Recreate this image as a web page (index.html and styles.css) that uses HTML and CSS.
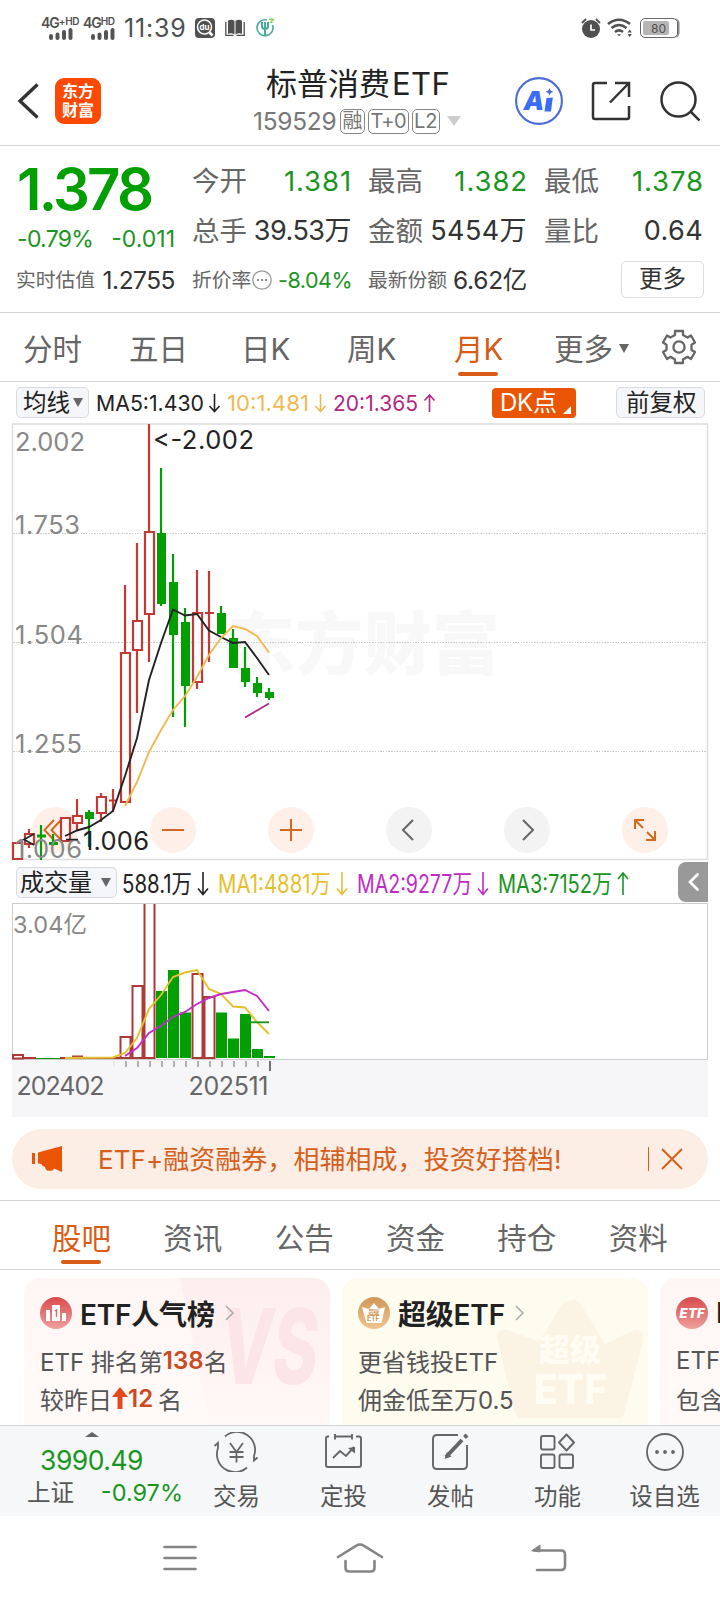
FILE: index.html
```html
<!DOCTYPE html>
<html lang="zh-CN">
<head>
    <meta charset="UTF-8">
    <meta name="viewport" content="width=device-width, initial-scale=1.0">
    <title>标普消费ETF 159529</title>
    <link rel="stylesheet" href="styles.css">
</head>
<body>
    <div class="status-bar">
        <div class="signal">
            <span>4G<sup>+HD</sup></span>
            <svg width="24" height="12" viewBox="0 0 24 12"><path d="M2 10V8M8.500 10V6.500M15 10V4M21.500 10V2" stroke="#555" stroke-width="4" stroke-linecap="round"/></svg>
        </div>
        <div class="signal second">
            <span>4G<sup>HD</sup></span>
            <svg width="24" height="12" viewBox="0 0 24 12"><path d="M2 10V8M8.500 10V6.500M15 10V4M21.500 10V2" stroke="#555" stroke-width="4" stroke-linecap="round"/></svg>
        </div>
        <span class="clock">11:39</span>
        <svg class="app-du" width="20" height="20" viewBox="0 0 20 20">
            <rect width="20" height="20" rx="4" fill="#505050"/>
            <circle cx="9.500" cy="9" r="7" fill="none" stroke="#fff" stroke-width="1.500"/>
            <path d="M14 14l3.500 3.500" stroke="#fff" stroke-width="2.500"/>
            <text x="4.500" y="12.300" fill="#fff" class="du-text">du</text>
        </svg>
        <svg class="app-book" width="20" height="18" viewBox="0 0 20 18">
            <path d="M3 1.800Q6-.5 9.500 1.800V15.500Q6 13.500 3 15zM17 1.800Q14-.5 10.500 1.800V15.500Q14 13.500 17 15z" fill="#505050"/>
            <path d="M.8 3v13.300h7.700M19.200 3v13.300h-7.700" fill="none" stroke="#505050" stroke-width="1.300"/>
        </svg>
        <svg class="app-fork" width="20" height="20" viewBox="0 0 20 20" fill="none" stroke="#4bab98">
            <path d="M11 3A8 8 0 1 0 16.500 8" stroke-width="1.600"/>
            <path d="M6 5v4Q6 12 9 12M9 5v13M12 5v4Q12 12 9 12" stroke-width="2"/>
            <path d="M13 2l5 1M14 6l4-4M16 1v5" stroke="#8ed35b" stroke-width="1.300"/>
        </svg>
        <div class="status-right">
            <svg width="20" height="20" viewBox="0 0 20 20">
                <circle cx="10" cy="11" r="9" fill="#505050"/>
                <path d="M1 5l4-4M19 5l-4-4" stroke="#505050" stroke-width="1.800"/>
                <path d="M10 6.500V12h4" fill="none" stroke="#fff" stroke-width="1.700"/>
            </svg>
            <svg width="26" height="20" viewBox="0 0 26 20" fill="none" stroke="#505050" stroke-width="2.600">
                <path d="M1 6Q12-2.500 23 6M4.500 10Q12 4 19.500 10M8 14Q12 10.800 16 14"/>
                <path d="M10 16.300l2 2 2-2z" fill="#505050" stroke="none"/>
                <path d="M20.500 14.500l2.200-3 2.200 3zM20.500 16l2.200 3 2.200-3z" fill="#505050" stroke="none"/>
            </svg>
            <div class="battery"><span>80</span></div>
        </div>
    </div>

    <header class="header">
        <svg class="back" width="22" height="36" viewBox="0 0 22 36"><path d="M20.500 1.500L3 18l17.500 16.500" fill="none" stroke="#333" stroke-width="3.400"/></svg>
        <div class="logo">东方<br>财富</div>
        <div class="title">
            <h1>标普消费<span>ETF</span></h1>
            <div class="code">
                <span>159529</span><i>融</i><i class="t0">T+0</i><i>L2</i>
                <svg width="14" height="10" viewBox="0 0 14 10"><path d="M0 0h14L7 10z" fill="#ccc"/></svg>
            </div>
        </div>
        <svg class="ai" width="48" height="48" viewBox="0 0 48 48">
            <circle cx="24" cy="24" r="22.900" fill="#fff" stroke="#4a6bd8" stroke-width="2.100"/>
            <text x="8.500" y="33" class="ai-text">A</text>
            <path d="M31.500 21l6.300-.5L36 34.500h-6.500z" fill="#3b6cf6"/>
            <path d="M34.500 11l1.200 2.600 2.600 1.200-2.600 1.200-1.200 2.600-1.200-2.600-2.600-1.200 2.600-1.200z" fill="#4a6bd8"/>
        </svg>
        <svg class="share" width="40" height="40" viewBox="0 0 40 40" fill="none" stroke="#333" stroke-width="2.500">
            <path d="M16 2H4Q2 2 2 4v32q0 2 2 2h32q2 0 2-2V25M19 21.500L37 3M24 2h14v14"/>
        </svg>
        <svg class="search" width="40" height="40" viewBox="0 0 40 40" fill="none" stroke="#333" stroke-width="2.500">
            <circle cx="18.500" cy="18.500" r="17"/><path d="M30.500 30.500l9 9"/>
        </svg>
    </header>

    <section class="quote">
        <div class="price">
            <strong>1.378</strong>
            <div><span>-0.79%</span><span>-0.011</span></div>
        </div>
        <div class="item"><label>今开</label><b class="down">1.381</b></div>
        <div class="item"><label>最高</label><b class="down">1.382</b></div>
        <div class="item"><label>最低</label><b class="down">1.378</b></div>
        <div class="item"><label>总手</label><b>39.53万</b></div>
        <div class="item"><label>金额</label><b class="wide">5454万</b></div>
        <div class="item"><label>量比</label><b class="wide">0.64</b></div>
        <div class="item small"><label>实时估值</label><b>1.2755</b></div>
        <div class="item small">
            <label>折价率</label>
            <svg width="20" height="20" viewBox="0 0 20 20"><circle cx="10" cy="10" r="9.200" fill="none" stroke="#999" stroke-width="1.300"/><path d="M5 10h2M9 10h2M13 10h2" stroke="#888" stroke-width="2"/></svg>
            <b class="down rate">-8.04%</b>
        </div>
        <div class="item small"><label>最新份额</label><b>6.62亿</b></div>
        <button class="more">更多</button>
    </section>

    <nav class="periods">
        <a>分时</a><a>五日</a><a>日K</a><a>周K</a><a class="active">月K</a>
        <a class="more-period">更多<svg width="10" height="9" viewBox="0 0 10 9"><path d="M0 0h10L5 9z" fill="#666"/></svg></a>
        <svg class="gear" width="36" height="36" viewBox="0 0 36 36" fill="none" stroke="#666" stroke-width="2.300">
            <path d="M14 2h8v4l4.500 2.600L30 6.500l4 7-3.500 2.200v5.200L34 23l-4 7-3.500-2.200L22 30.500V34h-8v-3.500l-4.500-2.700L6 30l-4-7 3.500-2.100v-5.200L2 13.500l4-7 3.500 2.100L14 6z" stroke-linejoin="round"/>
            <circle cx="18" cy="18" r="5.600"/>
        </svg>
    </nav>

    <div class="ma-row">
        <span class="chip">均线<svg width="10" height="9" viewBox="0 0 10 9"><path d="M0 0h10L5 9z" fill="#666"/></svg></span>
        <svg class="ma-values" width="344" height="34" viewBox="94 386 344 34">
            <text x="96" y="411" textLength="108" lengthAdjust="spacingAndGlyphs">MA5:1.430</text>
            <text x="227" y="411" textLength="82" lengthAdjust="spacingAndGlyphs" fill="#f0b952">10:1.481</text>
            <text x="333" y="411" textLength="85" lengthAdjust="spacingAndGlyphs" fill="#b02a83">20:1.365</text>
            <g fill="none" stroke-width="1.600">
                <path d="M214.500 394v17M209.500 406l5 5.500 5-5.500" stroke="#222"/>
                <path d="M320.500 394v17M315.500 406l5 5.500 5-5.500" stroke="#f0b952"/>
                <path d="M429.500 412v-17M424.500 400.500l5-5.500 5 5.500" stroke="#b02a83"/>
            </g>
        </svg>
        <span class="dk">DK点<svg width="8" height="8" viewBox="0 0 8 8"><path d="M8 0v8H0z" fill="#fff"/></svg></span>
        <span class="chip restore">前复权</span>
    </div>

    <!-- monthly candles -->
    <svg class="chart" width="698" height="439" viewBox="11 422 698 439">
        <rect x="12.500" y="424" width="695" height="435.500" fill="none" stroke="#ddd" stroke-width="1.500"/>
        <text class="watermark" x="227" y="669" textLength="273">东方财富</text>
        <path d="M13 533H707M13 642.500H707M13 751.500H707" stroke="#ccc" stroke-dasharray="1.500 1.200" class="grid"/>
        <g class="axis">
            <text x="15" y="451" textLength="70">2.002</text>
            <text x="15" y="534" textLength="65">1.753</text>
            <text x="15" y="644" textLength="68">1.504</text>
            <text x="15" y="753" textLength="67">1.255</text>
        </g>
        <g class="tools">
            <g fill="#fef0e9"><circle cx="55" cy="830" r="23"/><circle cx="173" cy="830" r="23"/><circle cx="291" cy="830" r="23"/><circle cx="645" cy="830" r="23"/></g>
            <g fill="#f3f3f3"><circle cx="409" cy="830" r="23"/><circle cx="527" cy="830" r="23"/></g>
            <path d="M54 820l-9.500 10 9.500 10M61 820l-9.500 10 9.500 10M162 830h22M280 830h22M291 819v22" stroke="#d4691f"/>
            <path d="M413 820l-10 10 10 10M523 820l10 10-10 10" stroke="#666"/>
            <path d="M635 829v-9h9M635 820l8 8M655 831v9h-9M655 840l-8-8" stroke="#d4691f" stroke-width="2.300"/>
        </g>
        <g class="up">
            <path d="M29 829v5M29 844v4M77 799v17M77 823v7M101 793v4M101 813v9M113 789v23M109 800.500h8M125 585v68M137 543v78M137 650v63M149 424v108M149 614v48M197 570v43M197 682v7M209 571v91M205 613h9"/>
            <path d="M13 843h9v16h-9zM25 834h9v10h-9zM61 818h9v23h-9zM73 816h9v7h-9zM97 797h9v16h-9zM121 653h9v149h-9zM133 621h9v29h-9zM145 532h9v82h-9zM193 613h9v69h-9z"/>
        </g>
        <g class="down-bar">
            <path d="M41 825v35M53 834v12M89 810v37M161 468v138M173 554v163M185 608v119M221 606v28M233 629v39M245 647v40M257 677v20M269 688v12" class="wick"/>
            <path d="M37 834.500h9v3h-9zM49 842h9v3h-9zM85 812h9v7h-9zM157 533h9v71h-9zM169 582h9v53h-9zM181 622h9v64h-9zM217 613h9v21h-9zM229 638h9v30h-9zM241 668h9v14h-9zM253 683h9v10h-9zM265 692h9v6h-9z"/>
        </g>
        <g class="lines">
            <polyline stroke="#222" points="65,836 77,830.500 89,827 101,820 113,811 125,776 137,738 149,680 161,643 173,609.500 185,615.500 197,614 209,630.500 221,637 233,643 245,642 257,658 269,675"/>
            <polyline stroke="#f0b952" points="125,806 137,782 149,752 161,730 173,710 185,696 197,677 209,655 221,638 233,626 245,629 257,636 269,652.500"/>
            <path stroke="#b02a83" d="M245 717.500l24-14"/>
        </g>
        <text class="axis" x="15" y="858" textLength="67">1.006</text>
        <g class="extreme">
            <text x="153" y="449" textLength="101">&lt;-2.002</text>
            <text x="83" y="850" textLength="66">1.006</text>
            <path d="M34 834l-10 5.500 10 5.500M66 839.500h12" stroke="#222" stroke-width="1.600" fill="none"/>
        </g>
    </svg>

    <div class="vol-row">
        <span class="chip">成交量<svg width="10" height="9" viewBox="0 0 10 9"><path d="M0 0h10L5 9z" fill="#666"/></svg></span>
        <svg class="vol-values" width="520" height="38" viewBox="118 862 520 38">
            <text x="122" y="892" textLength="70" lengthAdjust="spacingAndGlyphs">588.1万</text>
            <text x="218" y="892" textLength="113" lengthAdjust="spacingAndGlyphs" fill="#e5c02c">MA1:4881万</text>
            <text x="357" y="892" textLength="115" lengthAdjust="spacingAndGlyphs" fill="#c02cc6">MA2:9277万</text>
            <text x="498" y="892" textLength="114" lengthAdjust="spacingAndGlyphs" fill="#1c9422">MA3:7152万</text>
            <g fill="none" stroke-width="1.600">
                <path d="M203 871v22M198 887.500l5 6 5-6" stroke="#222"/>
                <path d="M342 871v22M337 887.500l5 6 5-6" stroke="#e5c02c"/>
                <path d="M483 871v22M478 887.500l5 6 5-6" stroke="#c02cc6"/>
                <path d="M623 894v-22M618 878l5-6 5 6" stroke="#1c9422"/>
            </g>
        </svg>
        <span class="collapse"><svg width="11" height="18" viewBox="0 0 11 18"><path d="M9.500 1.500L2 9l7.500 7.500" fill="none" stroke="#fff" stroke-width="2.700" stroke-linecap="round"/></svg></span>
    </div>

    <!-- volume -->
    <svg class="volume" width="698" height="215" viewBox="11 902 698 215">
        <rect x="12" y="1060" width="696" height="57" fill="#f6f6f9"/>
        <rect x="12.500" y="903.500" width="695" height="156" fill="#fff" stroke="#ccc"/>
        <text class="vol-max" x="13" y="933" textLength="74">3.04亿</text>
        <g class="up vol-up">
            <path d="M13 1055h10v3.500h-10zM24 1058h12M60 1058h60M72 1056.500h11M120.500 1037h10v21h-10zM132.500 986h10v72h-10zM144.500 904v154h10v-154M192.500 974h10v84h-10zM204.500 997h10v61h-10z"/>
        </g>
        <path d="M36 1058h24v1H36zM156 991h11v67h-11zM168 970h11v88h-11zM180 1012.500h11v45.500h-11zM216 1012.500h11v45.500h-11zM228 1038.500h11v19.500h-11zM240 1014h11v44h-11zM252 1049h11v9h-11zM264 1056h11v2h-11z" fill="#029f02"/>
        <g class="lines">
            <polyline stroke="#e5c02c" points="65,1058 113,1057.500 125,1053 137,1038 149,1009 161,995 173,977 185,972.500 197,970 209,989 221,994 233,1006.500 245,1007.500 257,1022 269,1034"/>
            <polyline stroke="#c02cc6" points="125,1056 137,1048 149,1033 161,1026 173,1017 185,1012 197,1004 209,998 221,994 233,992 245,990 257,996 269,1011"/>
            <path stroke="#1c9422" d="M251 1022.300h18"/>
        </g>
        <path d="M126 1061v6M138 1061v6M150 1061v6M162 1061v6M174 1061v6M186 1061v6M198 1061v6M210 1061v6M222 1061v6M234 1061v6M246 1061v6M258 1061v6" stroke="#999" stroke-width="1.500"/>
        <path d="M114 1061v6" stroke="#ddd"/>
        <path d="M270 1061v10" stroke="#444" stroke-width="1.500"/>
        <g class="dates">
            <text x="16.500" y="1094.500" textLength="88">202402</text>
            <text x="188.500" y="1094.500" textLength="80">202511</text>
        </g>
    </svg>

    <div class="banner">
        <svg width="31" height="28" viewBox="0 0 31 28" fill="#e95504"><path d="M0 8h3v11H0zM6 7.500L30 1v26l-8-3.500q-1 3-4.500 2-3.500 1-4.500-3.500-3-.5-3.500-3L6 18.500z"/></svg>
        <span class="text">ETF+融资融券，相辅相成，投资好搭档!</span>
        <span class="divider"></span>
        <svg class="close" width="22" height="22" viewBox="0 0 22 22"><path d="M1 1l20 20M21 1L1 21" stroke="#d4601c" stroke-width="2"/></svg>
    </div>

    <nav class="tabs">
        <a class="active">股吧</a><a>资讯</a><a>公告</a><a>资金</a><a>持仓</a><a>资料</a>
    </nav>

    <div class="cards">
        <article class="card pink">
            <svg class="card-bg" width="150" height="148" viewBox="0 0 150 148">
                <defs><linearGradient id="fade" x2="0" y2="1"><stop stop-color="#fdeeee"/><stop offset="1" stop-color="#fff8f7"/></linearGradient></defs>
                <path d="M0 0h150v148H30z" fill="url(#fade)"/>
                <text x="40" y="106" class="vs-text" textLength="98" lengthAdjust="spacingAndGlyphs">VS</text>
            </svg>
            <h2>
                <svg width="32" height="32" viewBox="0 0 32 32">
                    <defs><linearGradient id="red" x2="0" y2="1"><stop stop-color="#d9494c"/><stop offset="1" stop-color="#efa09d"/></linearGradient></defs>
                    <circle cx="16" cy="16" r="16" fill="url(#red)"/>
                    <path d="M6 13h4v11H6zM12 8h8v16h-8zM22 16h4v8h-4z" fill="#fff"/>
                    <path d="M15 14l1.500-1v7" fill="none" stroke="#df6866" stroke-width="1.500"/>
                </svg>
                ETF人气榜
                <svg class="arrow" width="9" height="16" viewBox="0 0 9 16"><path d="M1 1l7 7-7 7" fill="none" stroke="#aaa" stroke-width="1.500"/></svg>
            </h2>
            <p>ETF 排名第<em>138</em>名</p>
            <p>较昨日<svg width="16" height="22" viewBox="0 0 16 22"><path d="M8 0l8 10h-5.500v12h-5V10H0z" fill="#e04a1c"/></svg><em>12</em><span class="rank-unit">名</span></p>
        </article>
        <article class="card yellow">
            <svg class="card-bg crown" width="150" height="125" viewBox="0 0 150 125">
                <path d="M73 4q6-4 11 2l25 41 29-14q10-1 9 10l-19 74q-1 4-6 4H26q-5 0-7-5L2 45q-4-14 10-12l31 12L65 9q3-5 8-5z" fill="#fbf3e3"/>
                <g fill="#fffdf3"><text x="43" y="64" class="crown-cn" textLength="62">超级</text><text x="38" y="107" class="crown-en" textLength="73" lengthAdjust="spacingAndGlyphs">ETF</text></g>
            </svg>
            <h2>
                <svg width="32" height="32" viewBox="0 0 32 32">
                    <defs><linearGradient id="gold" x2="0" y2="1"><stop stop-color="#cf9758"/><stop offset="1" stop-color="#efc48d"/></linearGradient></defs>
                    <circle cx="16" cy="16" r="16" fill="url(#gold)"/>
                    <path d="M16 6l5 6 6-2-3.500 16h-15L4 10l7 2z" fill="#fff"/>
                    <text x="10.500" y="17" class="tiny">超级</text><text x="9" y="24" class="tiny en">ETF</text>
                </svg>
                超级ETF
                <svg class="arrow" width="9" height="16" viewBox="0 0 9 16"><path d="M1 1l7 7-7 7" fill="none" stroke="#aaa" stroke-width="1.500"/></svg>
            </h2>
            <p>更省钱投ETF</p>
            <p>佣金低至万0.5</p>
        </article>
        <article class="card pink">
            <h2>
                <svg width="32" height="32" viewBox="0 0 32 32"><circle cx="16" cy="16" r="16" fill="url(#red)"/><text x="3.500" y="21" class="etf-icon" textLength="25">ETF</text></svg>
                ETF
            </h2>
            <p>ETF</p>
            <p>包含</p>
        </article>
    </div>

    <footer class="toolbar">
        <div class="index">
            <svg width="14" height="5" viewBox="0 0 14 5"><path d="M0 5l7-5 7 5z" fill="#666"/></svg>
            <strong>3990.49</strong>
            <div><span>上证</span><b>-0.97%</b></div>
        </div>
        <a>
            <svg width="46" height="40" viewBox="0 0 46 40" fill="none" stroke="#666" stroke-width="1.800">
                <path d="M12 4.500A18 18 0 0 1 41 24v4.500l3.500-3M34 35.500A18 18 0 0 1 5 16v-5l-3.500 3"/>
                <path d="M17 11l6.500 9L30 11M23.500 20v10.500M16.500 20h14M16.500 25h14"/>
            </svg>
            交易
        </a>
        <a>
            <svg width="46" height="40" viewBox="0 0 46 40" fill="none" stroke="#666" stroke-width="1.900">
                <path d="M9 4.500H8q-2 0-2 2V33q0 2 2 2h31q2 0 2-2V6.500q0-2-2-2h-3M15 4.500h17M15 2v5.500M32 2v5.500"/>
                <path d="M13 26l7-7 6 5 8-9"/><path d="M28 16l7-1v6.500z" fill="#666" stroke="none"/>
            </svg>
            定投
        </a>
        <a>
            <svg width="46" height="40" viewBox="0 0 46 40" fill="none" stroke="#666" stroke-width="1.900">
                <path d="M31 3H10q-4 0-4 4v26q0 4 4 4h26q4 0 4-4V13"/>
                <path d="M35 8L19 25" stroke-width="4"/><path d="M37.500 5.500l2.500-2.500" stroke-width="4"/><path d="M20 20l-2.500 7 7-2.500z" fill="#666" stroke="none"/>
            </svg>
            发帖
        </a>
        <a>
            <svg width="46" height="40" viewBox="0 0 46 40" fill="none" stroke="#666" stroke-width="1.900">
                <rect x="7" y="4" width="13.500" height="13.500" rx="2"/><rect x="7" y="22.500" width="13.500" height="13.500" rx="2"/><rect x="25.500" y="22.500" width="13.500" height="13.500" rx="2"/>
                <path d="M32.500 2.500l7.500 8-7.500 8-7.500-8z" stroke-linejoin="round"/>
            </svg>
            功能
        </a>
        <a>
            <svg width="46" height="40" viewBox="0 0 46 40"><circle cx="23" cy="20" r="18" fill="none" stroke="#666" stroke-width="1.800"/><g fill="#666"><circle cx="15" cy="20" r="1.900"/><circle cx="23" cy="20" r="1.900"/><circle cx="31" cy="20" r="1.900"/></g></svg>
            设自选
        </a>
    </footer>

    <div class="system-nav">
        <svg width="34" height="28" viewBox="0 0 34 28"><path d="M1.500 3h31M1.500 14h31M1.500 25h31"/></svg>
        <svg width="48" height="30" viewBox="0 0 48 30"><path d="M2 14L20 2.800q4-2.500 8 0L46 14M9.500 18v7q0 3.500 3.500 3.500h22q3.500 0 3.500-3.500v-7"/></svg>
        <svg width="36" height="28" viewBox="0 0 36 28"><path d="M3 6.500h27q4 0 4 4V22q0 4-4 4H6"/><path d="M1 6.500L9 1v6.500z" fill="#858585" stroke-width="1"/></svg>
    </div>
</body>
</html>
```

FILE: styles.css
```css
* {
    box-sizing: border-box;
}
body {
    margin: 0;
    width: 720px;
    height: 1600px;
    overflow: hidden;
    background: #fff;
    color: #333;
    font-family: Inter, "Noto Sans CJK SC", sans-serif;
}
svg {
    display: block;
    flex: none;
}
b, em, i {
    font-weight: 400;
    font-style: normal;
}

/* status bar */
.status-bar {
    display: flex;
    align-items: center;
    height: 56px;
    padding: 0 42px 0 41px;
    color: #505050;
}
.signal {
    width: 37px;
    height: 23px;
    font-size: 14px;
    font-weight: 600;
    line-height: 11px;
    letter-spacing: -1px;
    white-space: nowrap;
}
.signal sup {
    font-size: 10px;
    line-height: 1px;
    vertical-align: 3px;
    letter-spacing: -0.4px;
}
.signal svg {
    margin-left: 8px;
}
.signal.second {
    margin-left: 5px;
    width: 34px;
}
.clock {
    width: 63px;
    margin-left: 7px;
    font-size: 25px;
    letter-spacing: 0.8px;
}
.app-du {
    margin-left: 8px;
}
.du-text {
    font-size: 8px;
    font-weight: 700;
}
.app-book {
    margin-left: 10px;
}
.app-fork {
    margin: -3px 0 0 11px;
}
.status-right {
    display: flex;
    align-items: center;
    gap: 6px;
    margin-left: auto;
}
.status-right svg:first-child {
    margin-left: -1px;
}
.battery {
    width: 38px;
    height: 20px;
    margin-left: 1px;
    padding: 2px;
    border: 1.500px solid #666;
    border-radius: 5px;
    box-shadow: 2px 0 0 -0.5px #888;
}
.battery span {
    display: block;
    width: 26px;
    height: 14px;
    padding-left: 8px;
    border-radius: 2px;
    background: #b5b5b5;
    font-size: 12px;
    line-height: 15px;
}

/* header */
.header {
    display: flex;
    align-items: center;
    height: 90px;
    padding: 0 20px 0 17px;
    border-bottom: 1px solid #d5d5d5;
}
.logo {
    width: 46px;
    height: 46px;
    margin-left: 16px;
    padding-top: 4px;
    border-radius: 9px;
    background: #fc4a04;
    color: #fff;
    font-size: 16px;
    font-weight: 700;
    line-height: 19px;
    text-align: center;
}
.title {
    width: 214px;
    margin-left: 152px;
}
h1 {
    margin: 0 0 0 13px;
    color: #222;
    font-size: 31px;
    font-weight: 400;
    line-height: 41px;
    white-space: nowrap;
}
h1 span {
    margin-left: 2px;
    letter-spacing: 0.4px;
}
.code {
    display: flex;
    align-items: center;
    gap: 3px;
    height: 34px;
    color: #777;
    font-size: 24.500px;
}
.code span {
    width: 84px;
    letter-spacing: -0.3px;
}
.code i {
    height: 25px;
    padding: 0 1.500px;
    border: 1.500px solid #888;
    border-radius: 5px;
    font-size: 20px;
    line-height: 22px;
    white-space: nowrap;
}
.code .t0 {
    letter-spacing: -0.6px;
}
.code svg {
    margin-left: 4px;
}
.ai {
    margin-left: 48px;
}
.ai-text {
    fill: #3b6cf6;
    font-size: 26px;
    font-weight: 900;
    font-style: italic;
}
.share {
    margin-left: 28px;
}
.search {
    margin-left: 29px;
}

/* quote */
.quote {
    display: grid;
    grid-template-columns: repeat(4, 158px);
    grid-template-rows: 50px 49px 50px;
    column-gap: 18px;
    align-items: center;
    height: 167px;
    padding: 10px 17px 0;
    border-bottom: 1px solid #d5d5d5;
}
.price {
    grid-row: span 2;
    align-self: start;
    color: #029f02;
}
.price strong {
    display: block;
    padding-top: 3px;
    font-size: 58px;
    font-weight: 600;
    line-height: 60px;
    letter-spacing: -2.800px;
}
.price div {
    display: flex;
    justify-content: space-between;
    margin-top: 6px;
    color: #1c9422;
    font-size: 23px;
    line-height: 28px;
    letter-spacing: -0.7px;
}
.price div span:last-child {
    letter-spacing: 0;
}
.item {
    display: flex;
    align-items: center;
    justify-content: space-between;
    margin-left: -1px;
    line-height: 30px;
    white-space: nowrap;
}
.item label {
    color: #666;
    font-size: 27.500px;
}
.item b {
    font-size: 27px;
    letter-spacing: -0.5px;
}
.item b.down {
    font-size: 27.500px;
    letter-spacing: 0.9px;
    margin-right: -1px;
}
.item b.wide {
    letter-spacing: 0.4px;
}
.item.small label {
    font-size: 19.800px;
}
.item.small b {
    font-size: 24.500px;
    letter-spacing: -0.5px;
}
.item.small .rate {
    margin-left: 6px;
    font-size: 21.500px;
}
.item .down {
    color: #1c9422;
}
.item.small:nth-last-child(2) b {
    letter-spacing: -0.3px;
}
.more {
    justify-self: end;
    width: 83px;
    height: 37px;
    margin: -2px -1px 0 0;
    padding: 0;
    border: 1px solid #ddd;
    border-radius: 5px;
    background: #fff;
    color: #333;
    font: 400 23.500px/32px Inter, "Noto Sans CJK SC", sans-serif;
}

/* period tabs */
.periods {
    display: flex;
    align-items: center;
    height: 69px;
    padding-left: 23px;
    border-bottom: 1px solid #d5d5d5;
    color: #666;
    font-size: 29.500px;
    line-height: 66px;
}
.periods a {
    position: relative;
    width: 108px;
    height: 68px;
    padding-top: 3px;
    white-space: nowrap;
}
.periods a:nth-child(2) {
    margin-left: -2px;
    width: 112px;
}
.periods a:nth-child(3) {
    width: 106px;
}
.periods a:nth-child(4) {
    width: 107px;
}
.periods .active, .tabs .active {
    color: #d95b16;
}
.active::after {
    content: "";
    position: absolute;
    left: 4px;
    bottom: 5px;
    width: 40px;
    height: 4px;
    border-radius: 2px;
    background: #d95b16;
}
.periods .more-period {
    display: flex;
    align-items: center;
    gap: 6px;
    margin-left: -8px;
}
.gear {
    margin-left: -1px;
}

/* indicator rows */
.ma-row, .vol-row {
    display: flex;
    align-items: center;
    height: 40px;
    padding: 1px 15px 0 16px;
}
.chip {
    display: flex;
    align-items: center;
    gap: 3px;
    height: 31px;
    width: 73px;
    padding-left: 6px;
    border: 1px solid #d8dbe0;
    border-radius: 5px;
    background: #f5f6f9;
    color: #222;
    font-size: 23.500px;
    line-height: 29px;
    white-space: nowrap;
}
.ma-values {
    margin-left: 5px;
    font-size: 22px;
    fill: #222;
}
.dk {
    display: flex;
    align-items: center;
    width: 84px;
    height: 30px;
    margin-left: 54px;
    padding-left: 8px;
    border-radius: 4px;
    background: #e95504;
    color: #fff;
    font-size: 24px;
    line-height: 28px;
    letter-spacing: -0.2px;
}
.dk svg {
    margin: 15px 0 0 6px;
}
.restore {
    width: 89px;
    margin-left: auto;
    padding-left: 9px;
}

/* charts */
.chart, .volume {
    margin-left: 11px;
}
.grid {
    shape-rendering: crispEdges;
}
.watermark {
    fill: #f8f8f8;
    font-size: 68px;
    font-weight: 900;
}
.axis {
    fill: #888;
    font-size: 25.500px;
}
.extreme {
    fill: #222;
    font-size: 25.500px;
}
.tools path {
    fill: none;
    stroke-width: 2;
}
.up path {
    fill: #fff;
    fill-opacity: 0.6;
    stroke: #c23a36;
    stroke-width: 2.200;
}
.vol-up path {
    stroke: #ae3a38;
    stroke-width: 2;
}
.down-bar {
    fill: #029f02;
}
.wick {
    stroke: #029f02;
    stroke-width: 2.200;
}
.lines {
    fill: none;
    stroke-width: 1.900;
}
.vol-row {
    height: 41px;
    padding-right: 12px;
}
.vol-row .chip {
    width: 101px;
    padding-left: 3px;
    gap: 9px;
    font-size: 24px;
}
.vol-values {
    margin-left: 1px;
    font-size: 25px;
    fill: #222;
}
.collapse {
    display: flex;
    align-items: center;
    justify-content: center;
    width: 30px;
    height: 40px;
    margin-left: auto;
    border-radius: 8px 0 0 8px;
    background: #999;
}
.vol-max {
    fill: #888;
    font-size: 23.500px;
}
.dates {
    fill: #666;
    font-size: 25px;
}

/* banner */
.banner {
    display: flex;
    align-items: center;
    width: 696px;
    height: 60px;
    margin: 12px 12px 11px;
    padding: 0 25px 0 20px;
    border-radius: 30px;
    background: #fcede5;
    color: #d4601c;
}
.banner .text {
    margin: -3px 0 0 35px;
    font-size: 26px;
    letter-spacing: 0.050px;
    white-space: nowrap;
}
.divider {
    width: 1px;
    height: 24px;
    margin-left: auto;
    background: #d4601c;
}
.close {
    margin-left: 12px;
}

/* content tabs */
.tabs {
    display: flex;
    height: 70px;
    padding-left: 52px;
    border-top: 1px solid #d5d5d5;
    border-bottom: 1px solid #d5d5d5;
    color: #666;
    font-size: 29.500px;
    line-height: 74px;
}
.tabs a {
    position: relative;
    width: 111.400px;
}
.tabs .active::after {
    left: 9px;
}

/* cards */
.cards {
    display: flex;
    gap: 12px;
    height: 155px;
    padding: 8px 0 0 24px;
    overflow: hidden;
}
.card {
    position: relative;
    flex: none;
    width: 306px;
    height: 160px;
    padding: 18px 16px;
    border-radius: 16px 16px 0 0;
    overflow: hidden;
    background: linear-gradient(#fef6f5, #fffaf9);
}
.card.yellow {
    background: #fefbef;
}
.card-bg {
    position: absolute;
    right: 0;
    top: 0;
}
.crown {
    top: 19px;
    right: 2px;
}
.vs-text {
    fill: #fbe5e6;
    font-size: 104px;
    font-weight: 800;
    font-style: italic;
}
.crown-cn {
    font-size: 31px;
    font-weight: 900;
}
.crown-en {
    font-size: 41px;
    font-weight: 800;
}
h2, .card p {
    position: relative;
    display: flex;
    align-items: center;
    margin: 0;
    white-space: nowrap;
}
h2 {
    gap: 8px;
    height: 34px;
    color: #222;
    font-size: 28px;
    font-weight: 600;
    letter-spacing: -0.2px;
}
.arrow {
    margin-left: 2px;
}
.card p {
    height: 38px;
    color: #555;
    font-size: 24px;
    white-space: pre;
}
.card p:first-of-type {
    margin-top: 11px;
}
.card em {
    color: #cc4a1e;
    font-weight: 600;
}
.rank-unit {
    margin-left: 5px;
}
.tiny {
    fill: #cf9758;
    font-size: 5.500px;
    font-weight: 700;
}
.tiny.en {
    font-size: 7px;
}
.etf-icon {
    fill: #fff;
    font-size: 13px;
    font-weight: 900;
    font-style: italic;
}

/* bottom bars */
.toolbar {
    display: flex;
    height: 91px;
    border-top: 1px solid #cfd4d8;
    background: #f5f7f9;
    color: #555;
    font-size: 23.500px;
}
.index {
    width: 183px;
    color: #1c9422;
    text-align: center;
}
.index svg {
    margin: 6px 0 0 85px;
}
.index strong {
    display: block;
    margin-top: 7px;
    font-size: 26.500px;
    font-weight: 400;
    line-height: 32px;
    letter-spacing: -0.5px;
}
.index div {
    display: flex;
    justify-content: space-between;
    padding: 0 0 0 27px;
    line-height: 34px;
}
.index div span {
    color: #555;
}
.toolbar a {
    display: flex;
    flex-direction: column;
    align-items: center;
    width: 107px;
    padding-top: 6px;
    line-height: 50px;
}
.toolbar a svg {
    margin-left: -2px;
}
.toolbar a:last-child svg {
    margin-left: 1px;
}
.system-nav {
    display: flex;
    align-items: center;
    height: 84px;
    padding-left: 163px;
}
.system-nav svg {
    fill: none;
    stroke: #858585;
    stroke-width: 2.600;
    stroke-linecap: round;
    stroke-linejoin: round;
}
.system-nav svg:nth-child(2) {
    margin-left: 139px;
}
.system-nav svg:nth-child(3) {
    margin-left: 147px;
}
```
